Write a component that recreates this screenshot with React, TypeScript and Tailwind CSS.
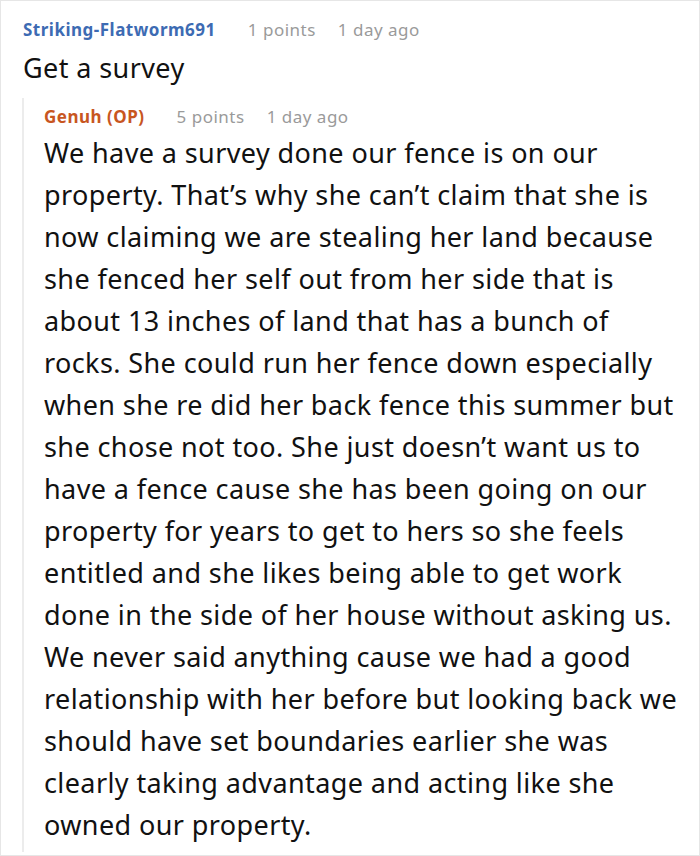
import React from 'react';

const body =
  'We have a survey done our fence is on our property. That\u2019s why she can\u2019t claim that she is now claiming we are stealing her land because she fenced her self out from her side that is about 13 inches of land that has a bunch of rocks. She could run her fence down especially when she re did her back fence this summer but she chose not too. She just doesn\u2019t want us to have a fence cause she has been going on our property for years to get to hers so she feels entitled and she likes being able to get work done in the side of her house without asking us. We never said anything cause we had a good relationship with her before but looking back we should have set boundaries earlier she was clearly taking advantage and acting like she owned our property.';

const Meta = ({ name, color, points }: { name: string; color: string; points: string }) => (
  <div className="flex items-center h-6 text-[17px] leading-6 tracking-[0.5px]">
    <span className={`font-bold ${color}`}>{name}</span>
    <span className="ml-8 text-[#9a9a9a]">{points}</span>
    <span className="ml-[22px] text-[#9a9a9a]">1 day ago</span>
  </div>
);

export default function App() {
  return (
    <div
      className="w-[700px] h-[856px] bg-white border border-[#e6e6e6] overflow-hidden text-[#111]"
      style={{ fontFamily: '"Noto Sans", "Open Sans", sans-serif' }}
    >
      <div className="pl-[22px] pt-[17px]">
        <Meta name="Striking-Flatworm691" color="text-[#3d6bb3]" points="1 points" />
        <div className="text-[27px] leading-[36px] mt-2 tracking-[0.4px]">Get a survey</div>

        <div className="-ml-px mt-3 border-l-2 border-[#ececec] pl-5 pr-3 pt-[7px] pb-[6px]">
          <Meta name="Genuh (OP)" color="text-[#c8561f]" points="5 points" />
          <p className="text-[27px] leading-[42px] mt-[3px] tracking-[0.4px]">{body}</p>
        </div>
      </div>
    </div>
  );
}
